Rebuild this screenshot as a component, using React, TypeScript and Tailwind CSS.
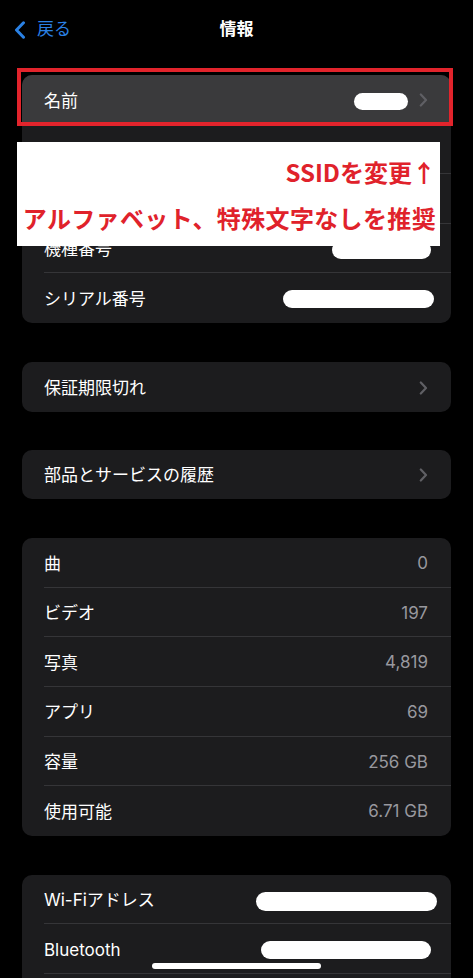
import React from "react";

const FONT = { fontFamily: 'Inter, "Noto Sans CJK JP", sans-serif' };

function Chevron() {
  return (
    <svg width="9" height="14" viewBox="0 0 9 14" className="shrink-0">
      <polyline points="1.8,1.5 7,7 1.8,12.5" fill="none" stroke="#5f5f64" strokeWidth="2.2" strokeLinecap="round" strokeLinejoin="round" />
    </svg>
  );
}

function Sep() {
  return <div className="relative -mt-px ml-[22px] h-px bg-[#353538]" />;
}

function Row({ label, children, className = "" }: { label?: string; children?: React.ReactNode; className?: string }) {
  return (
    <div className={"flex h-[49.6px] items-center justify-between pl-[22px] pr-[23px] " + className}>
      <span className="pt-[3px] text-[17px] text-white">{label}</span>
      <div className="flex items-center pt-[2px]">{children}</div>
    </div>
  );
}

function Val({ v }: { v: string }) {
  return <span className="text-[17px] text-[#98989e]">{v}</span>;
}

export default function App() {
  return (
    <div className="relative h-[978px] w-[473px] overflow-hidden bg-black" style={FONT}>
      {/* Nav */}
      <div className="relative flex h-[60px] items-center">
        <div className="ml-[14px] flex items-center text-[#2a81e4]">
          <svg width="12" height="18" viewBox="0 0 12 18">
            <polyline points="9.5,1.8 2.5,9 9.5,16.2" fill="none" stroke="#2a81e4" strokeWidth="3" strokeLinecap="round" strokeLinejoin="round" />
          </svg>
          <span className="ml-[11px] text-[17px]">戻る</span>
        </div>
        <span className="absolute left-1/2 -translate-x-1/2 text-[17px] font-semibold text-white">情報</span>
      </div>

      <div className="mx-[22px] mt-[15px] flex flex-col">
        {/* Card 1 */}
        <div className="overflow-hidden rounded-[10px] bg-[#1c1c1e]">
          <Row label="名前" className="bg-[#3a3a3c] pr-[22px]">
            <div className="mt-[2px] h-[17px] w-[54px] rounded-full bg-white" />
            <div className="ml-[11px] -mt-[2px]"><Chevron /></div>
          </Row>
          <Sep />
          <Row />
          <Sep />
          <Row />
          <Sep />
          <Row label="機種番号">
            <div className="-mr-[3px] h-[18px] w-[99px] rounded-full bg-white" />
          </Row>
          <Sep />
          <Row label="シリアル番号">
            <div className="-mr-[6px] h-[18px] w-[151px] rounded-full bg-white" />
          </Row>
        </div>

        {/* Card 2 */}
        <div className="mt-[39px] overflow-hidden rounded-[10px] bg-[#1c1c1e]">
          <Row label="保証期限切れ"><Chevron /></Row>
        </div>

        {/* Card 3 */}
        <div className="mt-[38px] overflow-hidden rounded-[10px] bg-[#1c1c1e]">
          <Row label="部品とサービスの履歴"><Chevron /></Row>
        </div>

        {/* Card 4 */}
        <div className="mt-[39px] overflow-hidden rounded-[10px] bg-[#1c1c1e]">
          <Row label="曲"><Val v="0" /></Row>
          <Sep />
          <Row label="ビデオ"><Val v="197" /></Row>
          <Sep />
          <Row label="写真"><Val v="4,819" /></Row>
          <Sep />
          <Row label="アプリ"><Val v="69" /></Row>
          <Sep />
          <Row label="容量"><Val v="256 GB" /></Row>
          <Sep />
          <Row label="使用可能"><Val v="6.71 GB" /></Row>
        </div>

        {/* Card 5 */}
        <div className="mt-[39px] overflow-hidden rounded-[10px] bg-[#1c1c1e]">
          <Row label="Wi-Fiアドレス">
            <div className="-mr-[9px] mt-[2px] h-[19px] w-[181px] rounded-full bg-white" />
          </Row>
          <Sep />
          <Row label="Bluetooth">
            <div className="-mr-[3px] h-[18px] w-[170px] rounded-full bg-white" />
          </Row>
          <Sep />
          <Row />
        </div>
      </div>

      {/* Annotation: red frame */}
      <div className="pointer-events-none absolute left-[17px] top-[68px] h-[58px] w-[436px] border-[4px] border-[#e2242c]" />

      {/* Annotation: white label */}
      <div
        className="absolute left-[17px] top-[142px] flex h-[104px] w-[423px] flex-col items-end bg-white pr-[4px] pt-[7px] text-[24px] font-bold leading-[46px] text-[#e0222b]"
        style={{ fontFamily: '"Noto Sans CJK JP", sans-serif' }}
      >
        <span>SSIDを変更↑</span>
        <span className="tracking-[0.35px]">アルファベット、特殊文字なしを推奨</span>
      </div>

      {/* Home indicator */}
      <div className="absolute left-[152px] top-[963px] h-[6px] w-[169px] rounded-full bg-white" />
    </div>
  );
}
